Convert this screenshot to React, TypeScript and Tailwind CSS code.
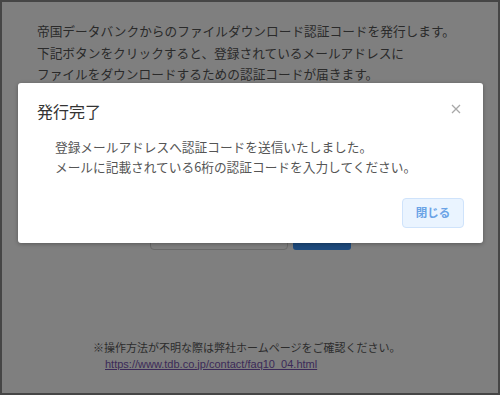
export default function App() {
  return (
    <div
      className="relative w-[500px] h-[395px] border-2 border-[#464646] bg-[#7f7f7f] overflow-hidden"
      style={{ fontFamily: '"Noto Sans CJK JP", "Noto Sans", sans-serif' }}
    >
      {/* page underneath the overlay */}
      <div className="pl-[35px] pt-[18px] text-[12.7px] leading-[21.5px] text-[#2a2a2a]">
        <p>帝国データバンクからのファイルダウンロード認証コードを発行します。</p>
        <p>下記ボタンをクリックすると、登録されているメールアドレスに</p>
        <p>ファイルをダウンロードするための認証コードが届きます。</p>
      </div>

      <div className="flex gap-[5px] ml-[148px] mt-[131px]">
        <div className="w-[138px] h-[34px] rounded-[4px] border border-[#6a6a6a] bg-[#7f7f7f]" />
        <div className="w-[58px] h-[34px] rounded-[3px] bg-[#1e4a7c]" />
      </div>

      <div className="mt-[89px] pl-[91px] text-[11px] leading-[16px] text-[#2c2c2c]">
        <p>※操作方法が不明な際は弊社ホームページをご確認ください。</p>
        <p className="pl-[12px]">
          <a
            href="#"
            className="underline text-[#3b2a58]"
            style={{ fontFamily: '"Liberation Sans", Arial, sans-serif' }}
          >
            https://www.tdb.co.jp/contact/faq10_04.html
          </a>
        </p>
      </div>

      {/* dialog */}
      <div className="absolute left-[16px] top-[81px] w-[465px] h-[160px] bg-white rounded-[3px] shadow-[0_1px_4px_rgba(0,0,0,0.3)]">
        <div className="flex items-center justify-between pl-[19px] pr-[22px] pt-[16px]">
          <h2 className="text-[16px] leading-[24px] text-[#333]">発行完了</h2>
          <svg width="10" height="10" viewBox="0 0 10 10" className="mt-[-4px]">
            <path d="M1 1L9 9M9 1L1 9" stroke="#a8a8a8" strokeWidth="1.3" />
          </svg>
        </div>
        <div className="pl-[37px] pt-[14px] text-[12.7px] leading-[19.5px] text-[#555]">
          <p>登録メールアドレスへ認証コードを送信いたしました。</p>
          <p>メールに記載されている6桁の認証コードを入力してください。</p>
        </div>
        <div className="flex justify-end pr-[19px] pt-[22px]">
          <button className="w-[62px] h-[30px] rounded-[4px] border border-[#cfe3fb] bg-[#eaf4ff] text-[11.5px] font-bold text-[#6aa3e6]">
            閉じる
          </button>
        </div>
      </div>
    </div>
  );
}
